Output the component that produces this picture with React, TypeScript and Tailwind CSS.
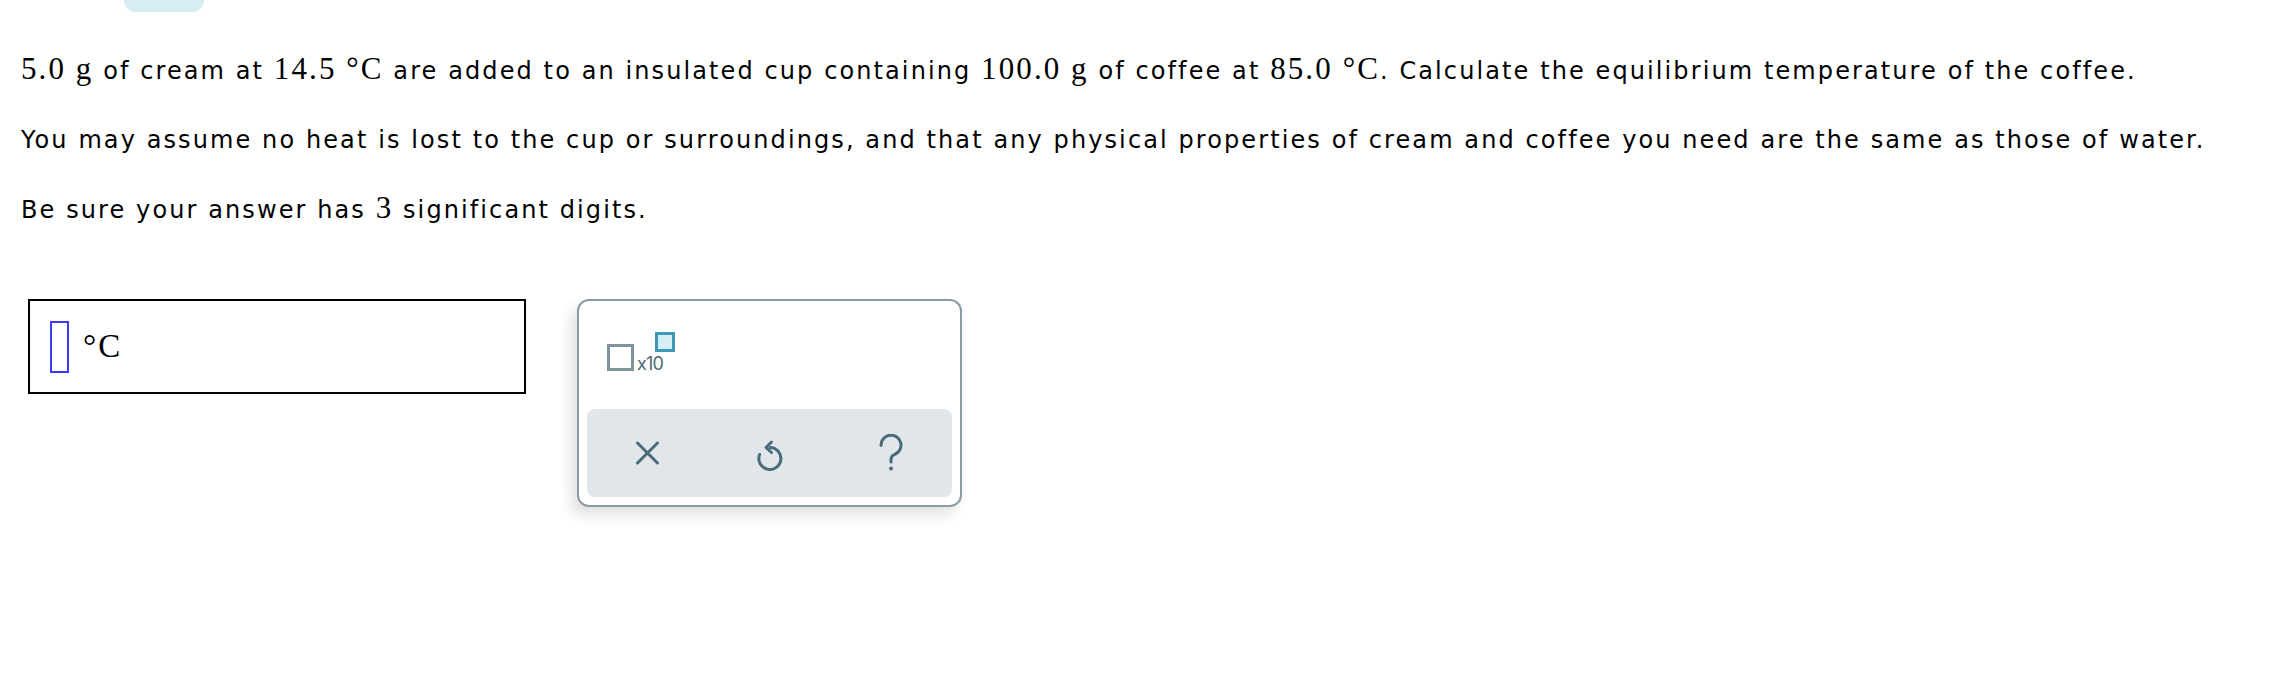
import React from "react";

function M({ children }: { children: React.ReactNode }) {
  return (
    <span className="font-['Liberation_Serif',serif] text-[31px] leading-none">{children}</span>
  );
}

export default function App() {
  return (
    <div className="w-[2284px] h-[695px] bg-white overflow-hidden text-black font-['DejaVu_Sans',Verdana,sans-serif]">
      <div className="ml-[124px] w-[80px] h-[12px] rounded-b-[14px] bg-[#d6edf3]" />
      <div className="pl-[21px] pt-[41px] text-[24px] leading-[36px] tracking-[2.1px]">
        <p className="h-[36px] whitespace-nowrap">
          <M>5.0</M> <M>g</M> of cream at <M>14.5 °C</M> are added to an insulated cup containing <M>100.0</M> <M>g</M> of coffee at <M>85.0 °C</M>. Calculate the equilibrium temperature of the coffee.
        </p>
        <p className="mt-[33px] h-[36px] whitespace-nowrap">
          You may assume no heat is lost to the cup or surroundings, and that any physical properties of cream and coffee you need are the same as those of water.
        </p>
        <p className="mt-[34px] h-[36px] whitespace-nowrap">
          Be sure your answer has <M>3</M> significant digits.
        </p>
      </div>
      <div className="flex items-start mt-[71px] pl-[28px]">
        <div className="w-[498px] h-[95px] border-2 border-black flex items-center pl-[20px] gap-[14px] tracking-[2px]">
          <div className="w-[19px] h-[52px] border-2 border-[#3b3bf5]" />
          <span className="font-['Liberation_Serif',serif] text-[33px] leading-none">°C</span>
        </div>
        <div className="ml-[51px] w-[385px] h-[208px] rounded-[12px] border-2 border-[#8a9ca4] bg-white shadow-[-6px_8px_14px_rgba(0,0,0,0.12)] px-[8px] pt-[43px] pb-[8px] flex flex-col">
          <div className="relative flex items-end h-[27px] pl-[20px]">
            <div className="w-[27px] h-[27px] border-[3px] border-[#7d929b]" />
            <span className="ml-[3px] mb-[-2px] text-[18px] leading-none text-[#4e6873] font-['Inter',sans-serif] tracking-[-0.8px]">x10</span>
            <div className="absolute left-[68px] top-[-12px] w-[20px] h-[20px] border-[3px] border-[#3f98b3] bg-[#d5edf4]" />
          </div>
          <div className="mt-auto h-[88px] rounded-[8px] bg-[#e0e6e9] flex items-center text-[#4a6b78]">
            <div className="flex-1 flex justify-center">
              <svg width="25" height="24" viewBox="0 0 25 24" fill="none" stroke="currentColor" strokeWidth="3" strokeLinecap="round">
                <path d="M2.5 2 L22.5 22 M22.5 2 L2.5 22" />
              </svg>
            </div>
            <div className="flex-1 flex justify-center">
              <svg width="28" height="36" viewBox="0 0 28 36" fill="none" stroke="currentColor" strokeWidth="3" strokeLinecap="round" strokeLinejoin="round">
                <path d="M14 12.5 A11 11 0 1 1 3.6 19.5" />
                <path d="M15.5 7 L10 12.5 L15.5 17.5" />
              </svg>
            </div>
            <div className="flex-1 flex justify-center">
              <svg width="26" height="38" viewBox="0 0 26 38" fill="none" stroke="currentColor" strokeWidth="3" strokeLinecap="round">
                <path d="M3 11.5 A10 10 0 1 1 16.5 20.5 C14 21.6 13 23 13 25.5 V28" />
                <circle cx="13" cy="34.5" r="2" fill="currentColor" stroke="none" />
              </svg>
            </div>
          </div>
        </div>
      </div>
    </div>
  );
}
